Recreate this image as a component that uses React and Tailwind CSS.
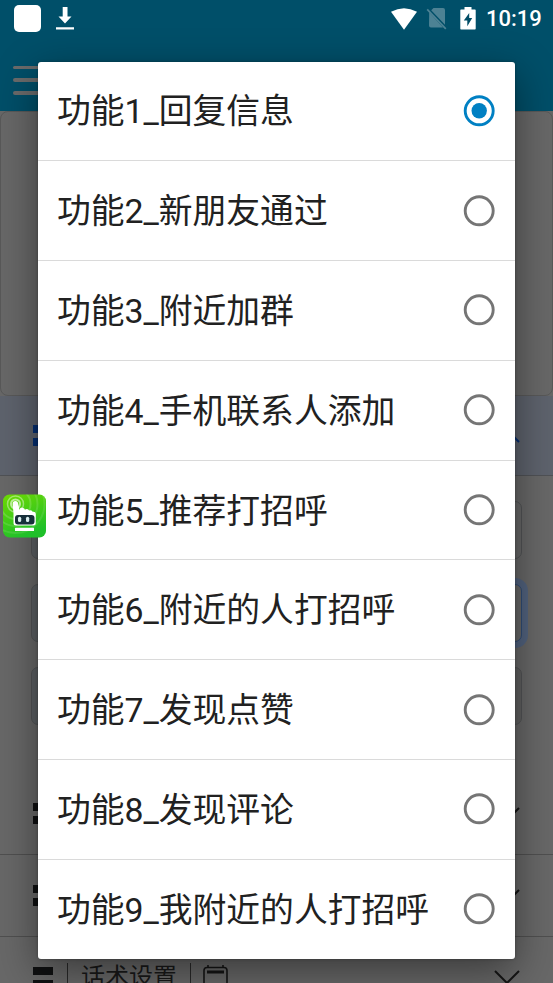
import React from "react";

const options = [
  "功能1_回复信息",
  "功能2_新朋友通过",
  "功能3_附近加群",
  "功能4_手机联系人添加",
  "功能5_推荐打招呼",
  "功能6_附近的人打招呼",
  "功能7_发现点赞",
  "功能8_发现评论",
  "功能9_我附近的人打招呼",
];

function StatusBar() {
  return (
    <div className="flex h-[36px] items-center justify-between pl-[14px] pr-[12px]">
      <div className="flex items-center gap-[15px]">
        <div className="h-[27px] w-[27px] rounded-[5px] bg-white" />
        <svg width="18" height="24" viewBox="0 0 18 24" fill="white">
          <path d="M6.7 1h4.8v9.5h4L9 17.5l-6.5-7h4.2zM0 21.2h18v2.3H0z" />
        </svg>
      </div>
      <div className="flex items-center">
        <svg width="28" height="23" viewBox="0 0 28 23" fill="white">
          <path d="M1 4.5Q14-2.5 27 4.5L14 22.5z" transform="translate(0 .2)" />
        </svg>
        <svg className="ml-[8px]" width="21" height="23" viewBox="0 0 21 23">
          <path d="M7.5 1H17a2 2 0 0 1 2 2v14.8L5.2 3.3zM3.2 5.2L17 20.5H5a2 2 0 0 1-2-2z" fill="#4d8294" />
          <path d="M1.2 2.4l18.6 19.4" stroke="#4d8294" strokeWidth="1.7" />
        </svg>
        <svg className="ml-[13px]" width="16" height="23" viewBox="0 0 16 23">
          <path d="M4.5 0h7v2.5H15q.7 0 .7.7v18.6q0 .7-.7.7H1q-.7 0-.7-.7V3.2q0-.7.7-.7h3.5z" fill="white" />
          <path d="M9.2 6L3.8 13.5h3.5v5.8L12.2 11H9.2z" fill="#004d66" />
        </svg>
        <span className="ml-[10px] mt-[2px] w-[55px] whitespace-nowrap text-[22px] font-medium leading-[26px] text-white">10:19</span>
      </div>
    </div>
  );
}

function Bars({ className = "bg-[#101112]" }) {
  return (
    <div className="flex w-5 flex-col gap-[5px]">
      <div className={"h-2 " + className} />
      <div className={"h-2 " + className} />
    </div>
  );
}

function Chevron({ up = false, color = "#161616" }) {
  return (
    <svg width="26" height="14" viewBox="0 0 26 14" fill="none" stroke={color} strokeWidth="2">
      <path d={up ? "M1 13L13 1l12 12" : "M1 1l12 12L25 1"} />
    </svg>
  );
}

function Page() {
  return (
    <div className="flex h-full flex-col bg-[#686868]">
      <header className="h-[110.5px] shrink-0 bg-[#004f69]">
        <StatusBar />
        <div className="ml-[13px] mt-[29.5px] flex w-9 flex-col gap-[9.3px]">
          <div className="h-[3.5px] rounded-full bg-[#6b6b6b]" />
          <div className="h-[3.5px] rounded-full bg-[#6b6b6b]" />
          <div className="h-[3.5px] rounded-full bg-[#6b6b6b]" />
        </div>
      </header>
      <div className="h-[285.5px] shrink-0 rounded-[8px] border-[1.5px] border-[#595959]" />
      <section className="flex h-[80px] shrink-0 items-center justify-between border-b border-[#505256] bg-[#5e636d] px-[33px]">
        <Bars className="bg-[#052f73]" />
        <Chevron up color="#052f73" />
      </section>
      <div className="flex h-[297px] shrink-0 flex-col gap-[25px] px-[31px] pt-[25px]">
        <div className="h-[58px] rounded-[7px] border border-[#525456] bg-linear-to-r from-[#5d6164] from-50% to-[#686868] to-50%" />
        <div className="flex h-[58px] justify-between">
          <div className="w-[120px] rounded-l-[7px] border border-[#525456] bg-[#5d6164]" />
          <div className="w-[120px] rounded-r-[7px] border-[1.5px] border-[#304c76] bg-[#686868] shadow-[0_0_0_6px_#52637f]" />
        </div>
        <div className="h-[58px] rounded-[7px] border border-[#525456] bg-linear-to-r from-[#5d6164] from-50% to-[#616161] to-50%" />
      </div>
      <section className="flex h-[82px] shrink-0 items-center justify-between border-b border-[#505050] px-[33px]">
        <Bars />
        <Chevron />
      </section>
      <section className="flex h-[82px] shrink-0 items-center justify-between border-b border-[#505050] px-[33px]">
        <Bars />
        <Chevron />
      </section>
      <section className="flex h-[46px] shrink-0 items-start justify-between px-[33px] pt-[26px]">
        <div className="flex items-start">
          <Bars className="mt-[5px] bg-[#101112] first:mt-[4px] last:mt-0" />
          <div className="ml-[14px] h-5 w-px bg-[#292929]" />
          <span className="ml-[13px] text-[24px] leading-[28px] text-[#191919]">话术设置</span>
          <div className="ml-[13px] h-5 w-px bg-[#292929]" />
          <svg className="ml-[12px] mt-[2px]" width="25" height="26" viewBox="0 0 25 26" fill="none" stroke="#151515" strokeWidth="1.6">
            <rect x="1" y="2.5" width="23" height="23" rx="3" />
            <path d="M5 0v2.5M20 0v2.5" />
            <path d="M4 7h17" strokeWidth="3" />
          </svg>
        </div>
        <div className="mt-[7px]">
          <Chevron />
        </div>
      </section>
    </div>
  );
}

function Radio({ checked }) {
  return (
    <svg width="32" height="32" viewBox="0 0 32 32" fill="none">
      <circle cx="16.2" cy="15.8" r="14" stroke={checked ? "#0080c3" : "#757575"} strokeWidth="2.9" />
      {checked && <circle cx="16.2" cy="15.8" r="7.7" fill="#0080c3" />}
    </svg>
  );
}

export default function App() {
  return (
    <div className="relative h-[983px] w-[553px] overflow-hidden font-['Roboto','Noto_Sans_CJK_SC',sans-serif]">
      <Page />
      <div
        role="radiogroup"
        className="absolute left-[38.4px] top-[61.5px] flex h-[897px] w-[476.2px] flex-col overflow-hidden rounded-[3px] bg-white shadow-[0_12px_42px_rgba(0,0,0,0.45),0_0_3px_rgba(0,0,0,0.3)]"
      >
        {options.map((label, i) => (
          <div
            key={label}
            role="radio"
            aria-checked={i === 0}
            className="flex min-h-0 flex-1 items-center justify-between border-b-[1.5px] border-[#dadada] pl-[18.5px] pr-[19.5px] last:border-b-0"
          >
            <span className="whitespace-nowrap pt-[3px] text-[33.8px] leading-[40px] text-[#212121]">{label}</span>
            <Radio checked={i === 0} />
          </div>
        ))}
      </div>
      <svg className="absolute left-[3px] top-[494px]" width="43" height="44" viewBox="0 0 43 44">
        <defs>
          <linearGradient id="appGreen" x1="0" y1="0" x2="0.4" y2="1">
            <stop offset="0" stopColor="#6fda00" />
            <stop offset="1" stopColor="#1fc02a" />
          </linearGradient>
          <clipPath id="appClip">
            <rect y="0.5" width="43" height="43" rx="6.5" />
          </clipPath>
        </defs>
        <g clipPath="url(#appClip)">
          <rect width="43" height="44" fill="url(#appGreen)" />
          <g fill="none" stroke="white">
            <circle cx="12.5" cy="10" r="4.5" strokeOpacity="0.6" strokeWidth="2" />
            <circle cx="12.5" cy="10" r="8" strokeOpacity="0.4" strokeWidth="1.5" />
            <circle cx="12.5" cy="10" r="15" strokeOpacity="0.16" strokeWidth="2" />
            <circle cx="12.5" cy="10" r="22" strokeOpacity="0.12" strokeWidth="2" />
            <circle cx="12.5" cy="10" r="29" strokeOpacity="0.1" strokeWidth="2" />
          </g>
          <path d="M9.6 10q0-3 2.7-3t3 3l1.2 6q.6-2.8 3-2.3t2.4 2q2.3-1.7 4.2.8 3-.8 3.5 1.3 3-.5 3.2 2V29q0 2.5-2.5 2.5H13q-2.5 0-2.5-2.5V19z" fill="white" />
          <rect x="12" y="21" width="19.5" height="9.5" rx="3" fill="#17303a" />
          <rect x="15" y="22.8" width="3.2" height="5.2" rx="1.5" fill="#d9eeee" />
          <rect x="23" y="22.8" width="3.2" height="5.2" rx="1.5" fill="#d9eeee" />
          <rect x="12" y="33.8" width="19" height="3.2" rx="0.6" fill="white" />
        </g>
      </svg>
    </div>
  );
}
